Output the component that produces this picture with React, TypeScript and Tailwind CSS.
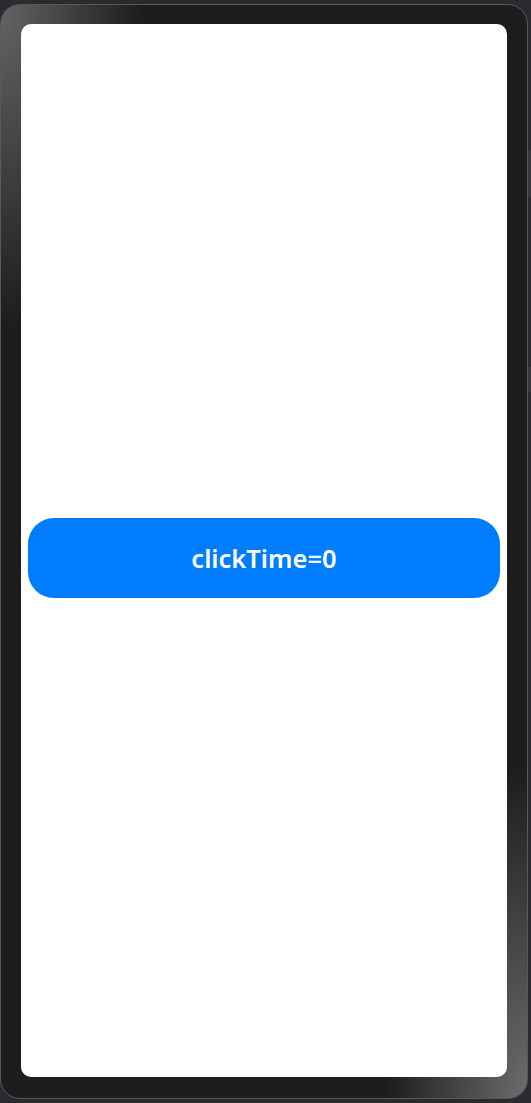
import React, { useState } from 'react';

// Phone preview frame with a single counter button
const App: React.FC = () => {
  const [clickTime, setClickTime] = useState<number>(0);

  return (
    <div className="relative w-[531px] h-[1103px] bg-[#2a2b2f] overflow-hidden">
      {/* side keys */}
      <div className="absolute left-[528px] top-[150px] w-[3px] h-[47px] bg-[#37383c]" />
      <div className="absolute left-[528px] top-[367px] w-[3px] h-[25px] bg-[#37383c]" />

      {/* device frame */}
      <div className="absolute left-0 top-[4px] w-[528px] h-[1095px] rounded-[20px] border border-[#58595c] bg-[#1d1d1d] bg-[radial-gradient(ellipse_140px_320px_at_0%_0%,#646464,transparent),radial-gradient(ellipse_140px_330px_at_100%_100%,#6c6c6c,transparent)] pl-[20px] pt-[19px]">
        {/* screen */}
        <div className="w-[486px] h-[1053px] rounded-[10px] bg-white flex flex-col justify-center pt-[15px]">
          <button
            type="button"
            onClick={() => setClickTime(clickTime + 1)}
            className="mx-[7px] h-[80px] rounded-[26px] bg-[#007dff] text-white text-[25.5px] font-semibold font-['Noto_Sans',sans-serif]"
          >
            clickTime={clickTime}
          </button>
        </div>
      </div>
    </div>
  );
};

export default App;
